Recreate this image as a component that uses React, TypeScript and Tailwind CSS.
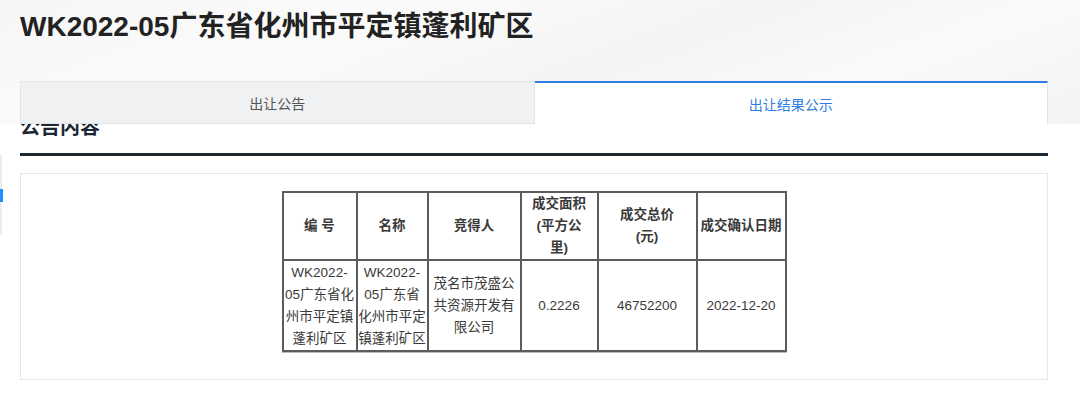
import React from 'react';

const FONT = "font-['Liberation_Sans','Noto_Sans_CJK_SC',sans-serif]";

const headers = [
  { w: 'w-[74px]', label: <>编 号</> },
  { w: 'w-[71px]', label: <>名称</> },
  { w: 'w-[93px]', label: <>竞得人</> },
  { w: 'w-[77px]', label: <>成交面积<br />(平方公<br />里)</> },
  { w: 'w-[99px]', label: <>成交总价<br />(元)</> },
  { w: 'w-[89px]', label: <>成交确认日期</> },
];

const row = [
  <>WK2022-<br />05广东省化<br />州市平定镇<br />蓬利矿区</>,
  <>WK2022-<br />05广东省<br />化州市平定<br />镇蓬利矿区</>,
  <>茂名市茂盛公<br />共资源开发有<br />限公司</>,
  <>0.2226</>,
  <>46752200</>,
  <>2022-12-20</>,
];

const App: React.FC = () => {
  return (
    <div className={`relative min-h-[397px] bg-white text-[#333] ${FONT}`}>
      {/* Top banner with faint background */}
      <div className="bg-[linear-gradient(160deg,#f6f6f6_0%,#fbfbfb_30%,#f4f4f4_55%,#fafafa_75%,#f3f3f3_100%)] px-5 pt-[9px]">
        <h1 className="text-[28px] leading-[36px] font-bold text-[#222]">
          WK2022-05广东省化州市平定镇蓬利矿区
        </h1>
        <div className="relative z-10 mt-9 flex w-[1028px] h-[43px]">
          <div className="flex-1 flex items-center justify-center pt-[3px] bg-[#f0f1f3] border border-[#e2e3e5] text-[14px] text-[#555]">
            出让公告
          </div>
          <div className="flex-1 flex items-center justify-center pt-[3px] bg-white border-t-2 border-t-[#2f7de1] border-r border-r-[#e2e3e5] text-[14px] text-[#2f7de1]">
            出让结果公示
          </div>
        </div>
      </div>

      {/* Content */}
      <div className="px-5">
        <h3 className="-mt-[11px] w-[1028px] border-b-[3px] border-[#1b2733] pb-[12px] text-[20px] leading-[28px] font-bold text-[#1b2733]">
          公告内容
        </h3>

        <div className="mt-[17px] w-[1028px] border border-[#e6e6e6] pt-[17px] pb-[27px] flex justify-center">
          <table className="table-fixed border-collapse border-2 border-[#5c5c5c] text-[13.5px] text-[#3a3a3a] shadow-[0_1px_0_#bdbdbd]">
            <colgroup>
              {headers.map((h, i) => (
                <col key={i} className={h.w} />
              ))}
            </colgroup>
            <thead>
              <tr className="h-[68px]">
                {headers.map((h, i) => (
                  <th key={i} className="border-2 border-[#5c5c5c] p-0 text-center font-bold leading-[22px]">
                    {h.label}
                  </th>
                ))}
              </tr>
            </thead>
            <tbody>
              <tr className="h-[91px]">
                {row.map((c, i) => (
                  <td key={i} className="border-2 border-[#5c5c5c] p-0 text-center leading-[22px]">
                    {c}
                  </td>
                ))}
              </tr>
            </tbody>
          </table>
        </div>
      </div>

      {/* Floating left edge marker */}
      <div className="absolute left-0 top-[155px] w-[2px] h-[80px] bg-[#ececec]" />
      <div className="absolute left-0 top-[189px] w-[3px] h-[13px] bg-[#1e8fff]" />
    </div>
  );
};

export default App;
